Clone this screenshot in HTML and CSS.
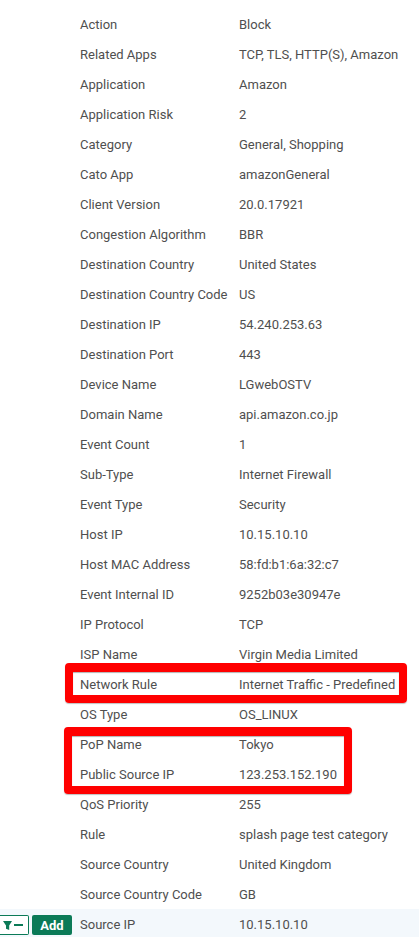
FILE: index.html
```html
<!DOCTYPE html>
<html>
  <head>
    <meta charset="utf-8">
    <title>Event details</title>
    <link rel="stylesheet" href="styles.css">
  </head>
  <body>
    <div class="fields">
      <div class="row"><span class="name">Action</span><span class="value">Block</span></div>
      <div class="row"><span class="name">Related Apps</span><span class="value">TCP, TLS, HTTP(S), Amazon</span></div>
      <div class="row"><span class="name">Application</span><span class="value">Amazon</span></div>
      <div class="row"><span class="name">Application Risk</span><span class="value">2</span></div>
      <div class="row"><span class="name">Category</span><span class="value">General, Shopping</span></div>
      <div class="row"><span class="name">Cato App</span><span class="value">amazonGeneral</span></div>
      <div class="row"><span class="name">Client Version</span><span class="value">20.0.17921</span></div>
      <div class="row"><span class="name">Congestion Algorithm</span><span class="value">BBR</span></div>
      <div class="row"><span class="name">Destination Country</span><span class="value">United States</span></div>
      <div class="row"><span class="name">Destination Country Code</span><span class="value">US</span></div>
      <div class="row"><span class="name">Destination IP</span><span class="value">54.240.253.63</span></div>
      <div class="row"><span class="name">Destination Port</span><span class="value">443</span></div>
      <div class="row"><span class="name">Device Name</span><span class="value">LGwebOSTV</span></div>
      <div class="row"><span class="name">Domain Name</span><span class="value">api.amazon.co.jp</span></div>
      <div class="row"><span class="name">Event Count</span><span class="value">1</span></div>
      <div class="row"><span class="name">Sub-Type</span><span class="value">Internet Firewall</span></div>
      <div class="row"><span class="name">Event Type</span><span class="value">Security</span></div>
      <div class="row"><span class="name">Host IP</span><span class="value">10.15.10.10</span></div>
      <div class="row"><span class="name">Host MAC Address</span><span class="value">58:fd:b1:6a:32:c7</span></div>
      <div class="row"><span class="name">Event Internal ID</span><span class="value">9252b03e30947e</span></div>
      <div class="row"><span class="name">IP Protocol</span><span class="value">TCP</span></div>
      <div class="row"><span class="name">ISP Name</span><span class="value">Virgin Media Limited</span></div>
      <div class="row"><span class="name">Network Rule</span><span class="value">Internet Traffic - Predefined</span></div>
      <div class="row"><span class="name">OS Type</span><span class="value">OS_LINUX</span></div>
      <div class="row"><span class="name">PoP Name</span><span class="value">Tokyo</span></div>
      <div class="row"><span class="name">Public Source IP</span><span class="value">123.253.152.190</span></div>
      <div class="row"><span class="name">QoS Priority</span><span class="value">255</span></div>
      <div class="row"><span class="name">Rule</span><span class="value">splash page test category</span></div>
      <div class="row"><span class="name">Source Country</span><span class="value">United Kingdom</span></div>
      <div class="row"><span class="name">Source Country Code</span><span class="value">GB</span></div>
      <div class="row hovered">
        <div class="actions">
          <button class="filter-btn">
            <svg width="20" height="9" viewBox="0 0 20 9"><path d="M0 0h9L6.2 4.4V9L3 7.8V4.4z" fill="#0b7a57"/><rect x="11" y="3" width="9" height="2" fill="#0b7a57"/></svg>
          </button>
          <button class="add-btn">Add</button>
        </div>
        <span class="name">Source IP</span><span class="value">10.15.10.10</span>
      </div>
    </div>
    <div class="callout callout-rule"></div>
    <div class="callout callout-pop"></div>
  </body>
</html>
```

FILE: styles.css
```css
html, body {
  margin: 0;
  height: 937px;
  overflow: hidden;
}

body {
  position: relative;
  background: #fff;
  font-family: Roboto, sans-serif;
  font-size: 13px;
  color: #4f4f4f;
}

.fields {
  padding-top: 9px;
}

.row {
  position: relative;
  display: flex;
  align-items: center;
  height: 30px;
  padding-left: 80px;
  white-space: nowrap;
}

.name {
  width: 159px;
  flex: none;
}

.hovered {
  background: #f3f8fc;
}

.actions {
  position: absolute;
  left: 0;
  top: 6px;
  display: flex;
  gap: 3px;
}

.filter-btn {
  width: 29px;
  height: 20px;
  margin: 0;
  padding: 0 0 0 3px;
  display: flex;
  align-items: center;
  background: #fff;
  border: 1px solid #0b7a57;
  border-left: 0;
  border-radius: 0 2px 2px 0;
}

.add-btn {
  width: 40px;
  height: 20px;
  margin: 0;
  padding: 0;
  background: #0b7a57;
  border: 0;
  border-radius: 2px;
  color: #fff;
  font-family: Roboto, sans-serif;
  font-size: 13px;
  font-weight: 700;
}

.callout {
  position: absolute;
  border: 8px solid #f00;
  border-top-width: 9px;
  border-radius: 4px;
  box-shadow: 0 1px 1px rgba(0, 0, 0, 0.25), inset 0 1px 1px rgba(0, 0, 0, 0.3);
}

.callout-rule {
  left: 65px;
  top: 663px;
  width: 326px;
  height: 23px;
}

.callout-pop {
  left: 64px;
  top: 727px;
  width: 272px;
  height: 50px;
}
```
